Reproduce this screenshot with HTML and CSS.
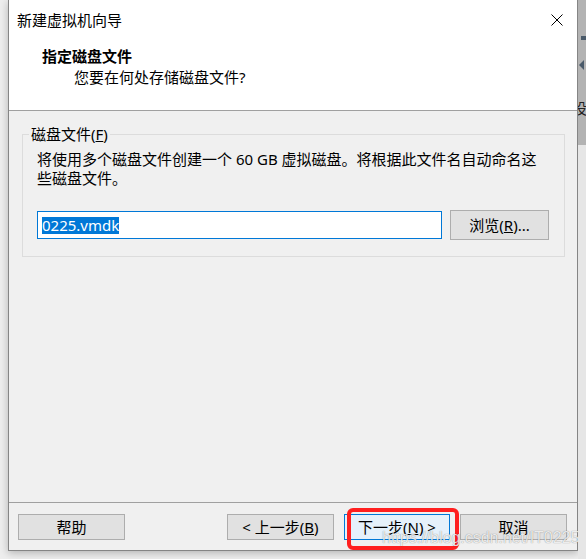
FILE: index.html
```html
<!DOCTYPE html>
<html lang="zh-CN">
<head>
<meta charset="utf-8">
<title>新建虚拟机向导</title>
<link rel="stylesheet" href="styles.css">
</head>
<body>
<div class="screen">
  <div class="gutter-left"></div>
  <div class="window">
    <div class="header">
      <div class="titlebar">
        <span class="title">新建虚拟机向导</span>
        <svg class="close" width="12" height="12" viewBox="0 0 12 12"><path d="M0.5 0.5 L11.5 11.5 M11.5 0.5 L0.5 11.5" stroke="#000" stroke-width="1" fill="none"/></svg>
      </div>
      <div class="heading">指定磁盘文件</div>
      <div class="subtitle">您要在何处存储磁盘文件?</div>
    </div>
    <div class="body">
      <fieldset class="group">
        <legend class="legend">磁盘文件(<u>F</u>)</legend>
        <p class="desc">将使用多个磁盘文件创建一个 60 GB 虚拟磁盘。将根据此文件名自动命名这<br>些磁盘文件。</p>
        <div class="filerow">
          <div class="input"><span class="sel">0225.vmdk</span></div>
          <div class="btn browse">浏览(<u>R</u>)...</div>
        </div>
      </fieldset>
    </div>
    <div class="footer">
      <div class="btn">帮助</div>
      <div class="spacer"></div>
      <div class="btn">&lt; 上一步(<u>B</u>)</div>
      <div class="btn next">下一步(<u>N</u>) &gt;<span class="mark"></span></div>
      <div class="btn">取消</div>
    </div>
    <div class="watermark">https://blog.csdn.net/IT0225</div>
  </div>
  <div class="gutter-right">
    <span class="dot"></span>
    <span class="tri"></span>
    <span class="frag">设</span>
  </div>
</div>
</body>
</html>
```

FILE: styles.css
```css
html, body {
  margin: 0;
  padding: 0;
}
body {
  background: #eeeeee;
  font-family: "Noto Sans", "Noto Sans CJK SC", sans-serif;
  font-size: 15px;
  color: #000;
  width: 586px;
  height: 559px;
  overflow: hidden;
}
.screen {
  display: flex;
  width: 586px;
  height: 559px;
}
.gutter-left {
  width: 8px;
  flex: none;
}
.window {
  position: relative;
  width: 568px;
  height: 550px;
  flex: none;
  border-left: 1px solid #858585;
  border-right: 1px solid #858585;
  border-bottom: 1px solid #858585;
  background: #f0f0f0;
  box-shadow: 0 2px 8px rgba(0, 0, 0, 0.25);
  display: flex;
  flex-direction: column;
}
.header {
  background: #fff;
  height: 110px;
  border-bottom: 1px solid #a0a0a0;
  flex: none;
}
.titlebar {
  height: 40px;
  display: flex;
  align-items: center;
  justify-content: space-between;
  padding: 0 14px 0 8px;
}
.title {
  line-height: 20px;
}
.close {
  display: block;
}
.heading {
  font-weight: bold;
  line-height: 20px;
  padding-left: 33px;
  margin-top: 6px;
}
.subtitle {
  line-height: 20px;
  padding-left: 65px;
  margin-top: 1px;
}
.body {
  flex: none;
  height: 392px;
  box-sizing: border-box;
  border-bottom: 1px solid #a0a0a0;
  padding: 13px 0 0 13px;
}
.group {
  margin: 0;
  width: 543px;
  box-sizing: border-box;
  border: 1px solid #dcdcdc;
  padding: 6px 14px 16px 14px;
}
.legend {
  padding: 0 2px;
  margin-left: -8px;
  line-height: 20px;
}
.desc {
  margin: 0;
  line-height: 19px;
}
.filerow {
  margin-top: 22px;
  display: flex;
  align-items: center;
  gap: 8px;
}
.input {
  width: 405px;
  height: 28px;
  box-sizing: border-box;
  border: 1px solid #0078d7;
  background: #fff;
  padding: 1px 0 0 4px;
  display: flex;
  align-items: center;
}
.sel {
  background: #0078d7;
  color: #fff;
  line-height: 17px;
  font-size: 15px;
}
.btn {
  position: relative;
  box-sizing: border-box;
  width: 107px;
  height: 26px;
  border: 1px solid #adadad;
  background: #e1e1e1;
  display: flex;
  align-items: center;
  justify-content: center;
  line-height: 20px;
  flex: none;
}
.browse {
  width: 99px;
  height: 30px;
}
.footer {
  flex: none;
  height: 47px;
  box-sizing: border-box;
  padding: 11px 10px 0 9px;
  display: flex;
  align-items: flex-start;
  gap: 10px;
}
.spacer {
  flex: 1;
}
.next {
  width: 106px;
  background: #e5f1fb;
  border-color: #0078d7;
}
.mark {
  position: absolute;
  left: 2px;
  top: -7px;
  width: 112px;
  height: 42px;
  box-sizing: border-box;
  border: 4px solid #ff1f1f;
  border-radius: 6px;
}
.watermark {
  position: absolute;
  left: 373px;
  top: 528px;
  font-family: "Liberation Sans", Arial, sans-serif;
  font-size: 16px;
  line-height: 20px;
  color: rgba(255, 255, 255, 0.85);
  text-shadow: 0 0 1px rgba(0, 0, 0, 0.5);
  white-space: nowrap;
}
.gutter-right {
  position: relative;
  width: 8px;
  flex: none;
  overflow: hidden;
  background: linear-gradient(#b3b3b3 0, #b3b3b3 145px, #e6e6e6 145px, #e6e6e6 100%);
}
.dot {
  position: absolute;
  left: 3px;
  top: 36px;
  width: 5px;
  height: 4px;
  background: #4a5a6a;
}
.tri {
  position: absolute;
  left: 1px;
  top: 60px;
  width: 0;
  height: 0;
  border-top: 5px solid transparent;
  border-bottom: 5px solid transparent;
  border-right: 5px solid #4a5a6a;
}
.frag {
  position: absolute;
  left: -6px;
  top: 98px;
  font-family: "Noto Sans CJK SC", sans-serif;
  font-size: 15px;
  line-height: 20px;
  color: #222;
}
```
